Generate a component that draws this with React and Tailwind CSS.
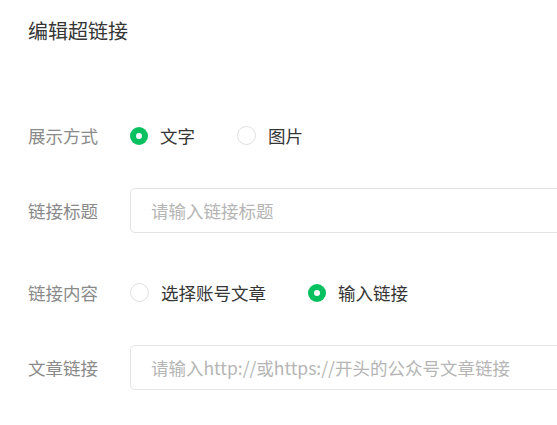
import React, { useState } from "react";

function Radio({ checked, label, onClick }) {
  return (
    <label className="flex items-center mr-[42px] cursor-pointer" onClick={onClick}>
      {checked ? (
        <span className="w-[18px] h-[18px] rounded-full bg-[#07c160] flex items-center justify-center">
          <span className="w-[6px] h-[6px] rounded-full bg-white" />
        </span>
      ) : (
        <span className="w-[19px] h-[19px] rounded-full border border-[#e0e0e0] bg-white" />
      )}
      <span className="ml-[12px] text-[17.5px] leading-[24px] text-[#353535]">{label}</span>
    </label>
  );
}

function Row({ label, children, className }) {
  return (
    <div className={"flex items-center h-[45px] " + (className || "")}>
      <div className="w-[102px] shrink-0 text-[17.5px] leading-[24px] text-[#8a8a8a]">{label}</div>
      {children}
    </div>
  );
}

export default function App() {
  const [mode, setMode] = useState("text");
  const [source, setSource] = useState("link");

  return (
    <div
      className="w-[557px] h-[425px] overflow-hidden bg-white pl-[28px] pt-[17px]"
      style={{ fontFamily: '"Noto Sans CJK SC", "Noto Sans", sans-serif' }}
    >
      {/* Title */}
      <h2 className="text-[20px] leading-[28px] text-[#353535] font-normal">编辑超链接</h2>

      {/* Display mode */}
      <Row label="展示方式" className="mt-[68px]">
        <Radio checked={mode === "text"} label="文字" onClick={() => setMode("text")} />
        <Radio checked={mode === "image"} label="图片" onClick={() => setMode("image")} />
      </Row>

      {/* Link title */}
      <Row label="链接标题" className="mt-[30px]">
        <input
          className="w-[500px] h-[45px] shrink-0 rounded-[5px] border border-[#e4e4e4] px-[20px] text-[17.5px] text-[#353535] placeholder:text-[#b5b5b5] outline-none"
          placeholder="请输入链接标题"
        />
      </Row>

      {/* Link content */}
      <Row label="链接内容" className="mt-[37px]">
        <Radio checked={source === "article"} label="选择账号文章" onClick={() => setSource("article")} />
        <Radio checked={source === "link"} label="输入链接" onClick={() => setSource("link")} />
      </Row>

      {/* Article link */}
      <Row label="文章链接" className="mt-[30px]">
        <input
          className="w-[500px] h-[45px] shrink-0 rounded-[5px] border border-[#e4e4e4] px-[20px] text-[17.5px] text-[#353535] placeholder:text-[#b5b5b5] outline-none"
          placeholder="请输入http://或https://开头的公众号文章链接"
        />
      </Row>
    </div>
  );
}
